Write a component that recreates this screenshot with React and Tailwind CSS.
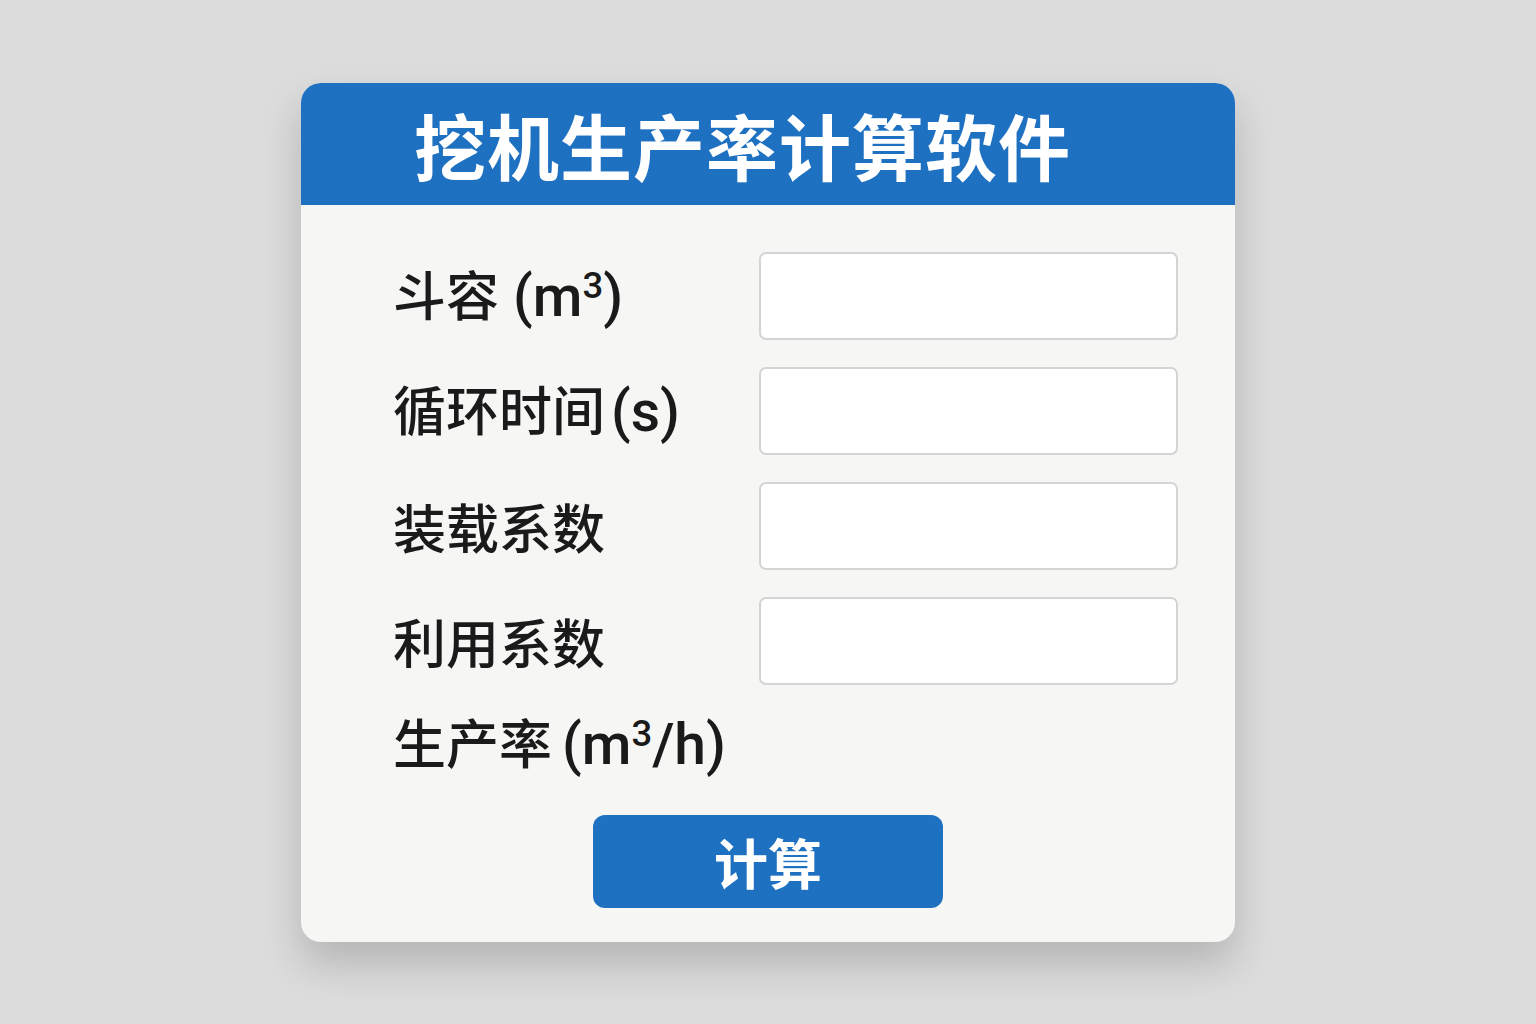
import React from "react";

const fields = [
	{label: "斗容", unit: "m", sup: "3", gap: "ml-[14px]"},
	{label: "循环时间", unit: "s", sup: "", gap: "ml-[6px]"},
	{label: "装载系数"},
	{label: "利用系数"},
];

const latin = {fontFamily: 'Roboto, "Liberation Sans", sans-serif'};

const Unit = ({unit, sup, rest, className}) => (
	<span className={"text-[57px] font-medium " + className} style={latin}>
		({unit}
		{sup && <span className="relative -top-[0.5em] text-[0.64em] leading-none">{sup}</span>}
		{rest})
	</span>
);

const App = () => {
	return (
		<div className="min-h-[1024px] w-full bg-[#dcdcdc] flex justify-center pt-[83px]"
		     style={{fontFamily: '"Noto Sans CJK SC", "Noto Sans", sans-serif'}}>
			<div className="w-[934px] h-[859px] rounded-[20px] bg-[#f6f6f5] overflow-hidden shadow-[0_22px_40px_rgba(0,0,0,0.18)] flex flex-col">
				{/* header */}
				<div className="h-[122px] bg-[#1e70c1] flex items-center pl-[113px]">
					<h1 className="text-white text-[72px] font-bold leading-none tracking-[1px]">挖机生产率计算软件</h1>
				</div>

				{/* form */}
				<div className="flex-1 flex flex-col pt-[47px] pl-[92px] pr-[57px]">
					<div className="flex flex-col gap-[27px]">
						{fields.map((f, i) => (
							<div key={i} className="flex items-center justify-between h-[88px]">
								<div className="text-[53px] font-medium text-[#1a1a1a] leading-none whitespace-nowrap">
									{f.label}
									{f.unit && <Unit unit={f.unit} sup={f.sup} className={f.gap}/>}
								</div>
								<input type="text"
								       className="w-[419px] h-[88px] bg-white border-2 border-[#d4d4d4] rounded-[7px] outline-none"/>
							</div>
						))}
					</div>
					<div className="mt-[30px] text-[53px] font-medium text-[#1a1a1a] leading-none whitespace-nowrap">
						生产率<Unit unit="m" sup="3" rest="/h" className="ml-[10px]"/>
					</div>
					<div className="flex justify-center pr-[35px] mt-[42px]">
						<button className="w-[350px] h-[93px] rounded-[12px] bg-[#1e70c1] text-white text-[54px] font-bold leading-none">
							计算
						</button>
					</div>
				</div>
			</div>
		</div>
	);
};

export default App;
